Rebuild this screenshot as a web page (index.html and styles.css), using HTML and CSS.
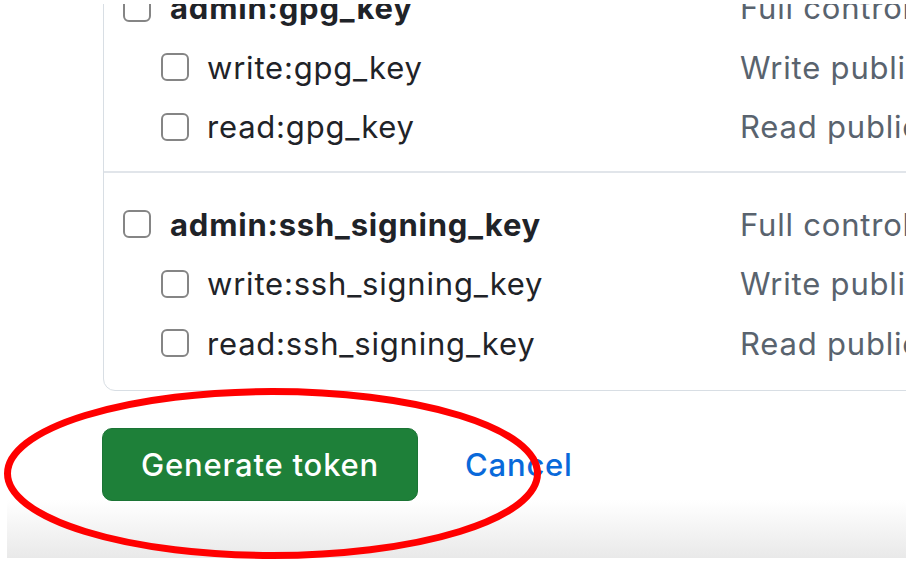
FILE: index.html
```html
<!DOCTYPE html>
<html lang="en">
<head>
<meta charset="utf-8">
<title>Generate token</title>
<link rel="stylesheet" href="styles.css">
</head>
<body>
<div class="frame">
  <div class="card">
    <div class="section first">
      <div class="row parent">
        <div class="label"><span class="box"></span><span class="name">admin:gpg_key</span></div>
        <div class="desc">Full control of public user GPG keys</div>
      </div>
      <div class="row child">
        <div class="label"><span class="box"></span><span class="name">write:gpg_key</span></div>
        <div class="desc">Write public user GPG keys</div>
      </div>
      <div class="row child">
        <div class="label"><span class="box"></span><span class="name">read:gpg_key</span></div>
        <div class="desc">Read public user GPG keys</div>
      </div>
    </div>
    <div class="section last">
      <div class="row parent">
        <div class="label"><span class="box"></span><span class="name">admin:ssh_signing_key</span></div>
        <div class="desc">Full control of public user SSH signing keys</div>
      </div>
      <div class="row child">
        <div class="label"><span class="box"></span><span class="name">write:ssh_signing_key</span></div>
        <div class="desc">Write public user SSH signing keys</div>
      </div>
      <div class="row child">
        <div class="label"><span class="box"></span><span class="name">read:ssh_signing_key</span></div>
        <div class="desc">Read public user SSH signing keys</div>
      </div>
    </div>
  </div>
  <div class="actions">
    <button class="btn-primary" type="button">Generate token</button>
    <a class="cancel" href="#">Cancel</a>
  </div>
</div>
<svg class="annotation" width="907" height="563" viewBox="0 0 907 563" aria-hidden="true">
  <ellipse cx="272.5" cy="473.5" rx="265" ry="82" fill="none" stroke="#ff0000" stroke-width="7"/>
</svg>
</body>
</html>
```

FILE: styles.css
```css
html, body {
  margin: 0;
  padding: 0;
  background: #ffffff;
}

body {
  position: relative;
  width: 907px;
  height: 563px;
  overflow: hidden;
  font-family: Inter, "Liberation Sans", Arial, sans-serif;
  color: #1f2328;
}

.frame {
  margin: 4px 0 0 7px;
  width: 899px;
  height: 554px;
  overflow: hidden;
  background: linear-gradient(to bottom, #ffffff 0, #ffffff 496px, #e9e9e9 554px);
}

.card {
  margin-left: 96px;
  width: 1000px;
  margin-top: -27px;
  border: 1.5px solid #d8dee4;
  border-radius: 0 0 12px 12px;
  background: #ffffff;
}

.section.first {
  padding: 0 0 14px;
  border-bottom: 2px solid #e1e5ea;
}

.section.last {
  padding: 22px 0 17px;
}

.row {
  display: flex;
  align-items: center;
  height: 59.5px;
}

.label {
  display: flex;
  align-items: center;
  width: 636px;
  flex: none;
  box-sizing: border-box;
}

.row.parent .label {
  padding-left: 19px;
}

.row.child .label {
  padding-left: 57px;
}

.box {
  width: 28px;
  height: 28px;
  box-sizing: border-box;
  border: 2px solid #858585;
  border-radius: 6px;
  flex: none;
  background: #ffffff;
}

.name {
  font-size: 31px;
  letter-spacing: 0.8px;
  margin-left: 19px;
  white-space: nowrap;
}

.row.child .name {
  margin-left: 18px;
}

.row.parent .name {
  font-weight: 700;
}

.desc {
  font-size: 31px;
  letter-spacing: 0.8px;
  color: #59636e;
  white-space: nowrap;
}

.actions {
  display: flex;
  align-items: center;
  margin: 37px 0 0 95px;
  gap: 47px;
}

.btn-primary {
  width: 316px;
  height: 73px;
  border: 1px solid #1b7435;
  border-radius: 10px;
  background: #1e8039;
  color: #ffffff;
  font-family: Inter, "Liberation Sans", Arial, sans-serif;
  font-size: 31px;
  letter-spacing: 0.8px;
  font-weight: 500;
  padding: 0;
}

.cancel {
  font-size: 31px;
  letter-spacing: 0.8px;
  font-weight: 500;
  color: #0969da;
  text-decoration: none;
}

.annotation {
  position: absolute;
  left: 0;
  top: 0;
  pointer-events: none;
}
```
